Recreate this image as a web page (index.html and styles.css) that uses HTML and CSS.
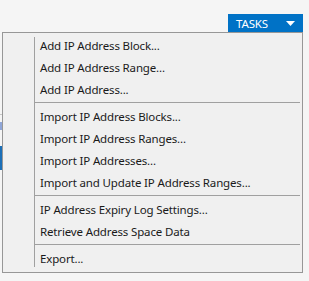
FILE: index.html
```html
<html lang="en"><head>
    <meta charset="UTF-8">
    <meta name="viewport" content="width=device-width, initial-scale=1.0">
    <title>Tasks</title>

    <link rel="stylesheet" href="styles.css">
</head>

<body>
    <div class="page">
        <div class="toolbar">
            <div class="tasks">
                <span>TASKS</span>
                <svg class="caret" width="9" height="5" viewBox="0 0 9 5"><path d="M0 0H9L4.5 5Z" fill="#fff"/></svg>
            </div>
        </div>

        <div class="behind">
            <div class="rule"></div>
            <div class="row_light"></div>
            <div class="row_selected"></div>
        </div>

        <div class="menu">
            <div class="item">Add IP Address Block...</div>
            <div class="item">Add IP Address Range...</div>
            <div class="item">Add IP Address...</div>
            <div class="sep"></div>
            <div class="item">Import IP Address Blocks...</div>
            <div class="item">Import IP Address Ranges...</div>
            <div class="item">Import IP Addresses...</div>
            <div class="item">Import and Update IP Address Ranges...</div>
            <div class="sep"></div>
            <div class="item">IP Address Expiry Log Settings...</div>
            <div class="item">Retrieve Address Space Data</div>
            <div class="sep"></div>
            <div class="item">Export...</div>
        </div>
    </div>
</body>
</html>
```

FILE: styles.css
```css
body {
    margin: 0;
    background-color: #f5f5f5;
    font-family: "Noto Sans", "Open Sans", sans-serif;
    font-size: 11.5px;
    letter-spacing: -0.15px;
    color: #1a1a1a;
}

.page {
    position: relative;
    width: 309px;
    height: 281px;
    overflow: hidden;
}

.toolbar {
    display: flex;
    justify-content: flex-end;
    padding: 14px 6px 0 0;
}

.tasks {
    display: flex;
    align-items: center;
    justify-content: space-between;
    width: 75px;
    height: 18px;
    box-sizing: border-box;
    padding: 0 8px 0 8px;
    background-color: #0072c6;
    color: #fff;
    font-size: 11.5px;
}

.caret {
    margin-top: 1px;
}

/* list rows peeking out from under the menu */
.behind {
    display: flex;
    flex-direction: column;
    width: 20px;
}

.rule {
    height: 1px;
    margin-top: 82px;
    background-color: #c6c6c6;
}

.row_light {
    height: 8px;
    margin-top: 7px;
    background-color: #8fa6d8;
}

.row_selected {
    height: 24px;
    margin-top: 16px;
    background-color: #1c6fb7;
}

.menu {
    position: absolute;
    top: 32px;
    left: 2px;
    width: 301px;
    height: 241px;
    box-sizing: border-box;
    padding: 2px 2px 2px 0;
    background-color: #f0f0f0;
    border: 1px solid #979797;
    display: flex;
    flex-direction: column;
}

.menu::before {
    content: "";
    position: absolute;
    left: 31px;
    top: 4px;
    bottom: 5px;
    width: 1px;
    background-color: #a0a0a0;
}

.item {
    height: 22px;
    line-height: 22px;
    padding-left: 37px;
    white-space: nowrap;
}

.sep {
    height: 1px;
    margin: 1px 0 3px 32px;
    background-color: #a0a0a0;
}
```
